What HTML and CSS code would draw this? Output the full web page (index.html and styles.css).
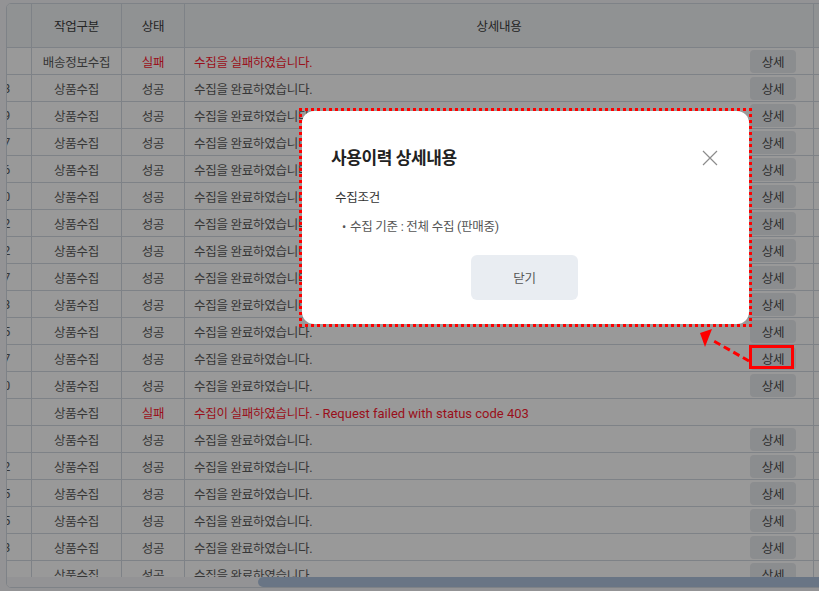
FILE: index.html
```html
<!DOCTYPE html>
<html lang="ko">
<head>
<meta charset="UTF-8">
<meta name="viewport" content="width=device-width, initial-scale=1.0">
<title>사용이력</title>
<link rel="stylesheet" href="styles.css">
</head>
<body>
<div class="history-table">
  <div class="table-view">
    <table>
      <thead>
        <tr>
          <th class="col-no">No</th>
          <th class="col-date">작업일시</th>
          <th class="col-user">작업자</th>
          <th class="col-count">건수</th>
          <th class="col-type">작업구분</th>
          <th class="col-status">상태</th>
          <th class="col-detail">상세내용</th>
          <th class="col-end">처리시간</th>
        </tr>
      </thead>
      <tbody>
        <tr>
          <td>21</td><td>2024-05-14 10:42</td><td>admin</td><td class="num"></td>
          <td>배송정보수집</td><td class="fail">실패</td>
          <td class="detail"><div class="detail-row"><span class="fail">수집을 실패하였습니다.</span><button class="btn-detail">상세</button></div></td>
          <td>00:03</td>
        </tr>
        <tr>
          <td>20</td><td>2024-05-14 10:31</td><td>admin</td><td class="num">1203</td>
          <td>상품수집</td><td>성공</td>
          <td class="detail"><div class="detail-row"><span>수집을 완료하였습니다.</span><button class="btn-detail">상세</button></div></td>
          <td>01:12</td>
        </tr>
        <tr>
          <td>19</td><td>2024-05-13 18:02</td><td>admin</td><td class="num">1189</td>
          <td>상품수집</td><td>성공</td>
          <td class="detail"><div class="detail-row"><span>수집을 완료하였습니다.</span><button class="btn-detail">상세</button></div></td>
          <td>01:09</td>
        </tr>
        <tr>
          <td>18</td><td>2024-05-13 09:15</td><td>admin</td><td class="num">1187</td>
          <td>상품수집</td><td>성공</td>
          <td class="detail"><div class="detail-row"><span>수집을 완료하였습니다.</span><button class="btn-detail">상세</button></div></td>
          <td>01:08</td>
        </tr>
        <tr>
          <td>17</td><td>2024-05-12 17:48</td><td>admin</td><td class="num">1176</td>
          <td>상품수집</td><td>성공</td>
          <td class="detail"><div class="detail-row"><span>수집을 완료하였습니다.</span><button class="btn-detail">상세</button></div></td>
          <td>01:05</td>
        </tr>
        <tr>
          <td>16</td><td>2024-05-12 11:20</td><td>admin</td><td class="num">1160</td>
          <td>상품수집</td><td>성공</td>
          <td class="detail"><div class="detail-row"><span>수집을 완료하였습니다.</span><button class="btn-detail">상세</button></div></td>
          <td>01:04</td>
        </tr>
        <tr>
          <td>15</td><td>2024-05-11 16:33</td><td>admin</td><td class="num">1152</td>
          <td>상품수집</td><td>성공</td>
          <td class="detail"><div class="detail-row"><span>수집을 완료하였습니다.</span><button class="btn-detail">상세</button></div></td>
          <td>01:02</td>
        </tr>
        <tr>
          <td>14</td><td>2024-05-11 08:57</td><td>admin</td><td class="num">1142</td>
          <td>상품수집</td><td>성공</td>
          <td class="detail"><div class="detail-row"><span>수집을 완료하였습니다.</span><button class="btn-detail">상세</button></div></td>
          <td>01:02</td>
        </tr>
        <tr>
          <td>13</td><td>2024-05-10 15:10</td><td>admin</td><td class="num">1137</td>
          <td>상품수집</td><td>성공</td>
          <td class="detail"><div class="detail-row"><span>수집을 완료하였습니다.</span><button class="btn-detail">상세</button></div></td>
          <td>01:01</td>
        </tr>
        <tr>
          <td>12</td><td>2024-05-10 09:44</td><td>admin</td><td class="num">1123</td>
          <td>상품수집</td><td>성공</td>
          <td class="detail"><div class="detail-row"><span>수집을 완료하였습니다.</span><button class="btn-detail">상세</button></div></td>
          <td>00:59</td>
        </tr>
        <tr>
          <td>11</td><td>2024-05-09 14:21</td><td>admin</td><td class="num">1115</td>
          <td>상품수집</td><td>성공</td>
          <td class="detail"><div class="detail-row"><span>수집을 완료하였습니다.</span><button class="btn-detail">상세</button></div></td>
          <td>00:58</td>
        </tr>
        <tr>
          <td>10</td><td>2024-05-09 08:30</td><td>admin</td><td class="num">1107</td>
          <td>상품수집</td><td>성공</td>
          <td class="detail"><div class="detail-row"><span>수집을 완료하였습니다.</span><button class="btn-detail">상세</button></div></td>
          <td>00:58</td>
        </tr>
        <tr>
          <td>9</td><td>2024-05-08 17:05</td><td>admin</td><td class="num">1100</td>
          <td>상품수집</td><td>성공</td>
          <td class="detail"><div class="detail-row"><span>수집을 완료하였습니다.</span><button class="btn-detail">상세</button></div></td>
          <td>00:57</td>
        </tr>
        <tr>
          <td>8</td><td>2024-05-08 10:12</td><td>admin</td><td class="num"></td>
          <td>상품수집</td><td class="fail">실패</td>
          <td class="detail"><div class="detail-row"><span class="fail">수집이 실패하였습니다.<span class="en"> - Request failed with status code 403</span></span></div></td>
          <td>00:01</td>
        </tr>
        <tr>
          <td>7</td><td>2024-05-07 16:40</td><td>admin</td><td class="num"></td>
          <td>상품수집</td><td>성공</td>
          <td class="detail"><div class="detail-row"><span>수집을 완료하였습니다.</span><button class="btn-detail">상세</button></div></td>
          <td>00:55</td>
        </tr>
        <tr>
          <td>6</td><td>2024-05-07 09:02</td><td>admin</td><td class="num">1092</td>
          <td>상품수집</td><td>성공</td>
          <td class="detail"><div class="detail-row"><span>수집을 완료하였습니다.</span><button class="btn-detail">상세</button></div></td>
          <td>00:54</td>
        </tr>
        <tr>
          <td>5</td><td>2024-05-06 15:27</td><td>admin</td><td class="num">1085</td>
          <td>상품수집</td><td>성공</td>
          <td class="detail"><div class="detail-row"><span>수집을 완료하였습니다.</span><button class="btn-detail">상세</button></div></td>
          <td>00:54</td>
        </tr>
        <tr>
          <td>4</td><td>2024-05-06 08:48</td><td>admin</td><td class="num">1075</td>
          <td>상품수집</td><td>성공</td>
          <td class="detail"><div class="detail-row"><span>수집을 완료하였습니다.</span><button class="btn-detail">상세</button></div></td>
          <td>00:53</td>
        </tr>
        <tr>
          <td>3</td><td>2024-05-05 13:36</td><td>admin</td><td class="num">1063</td>
          <td>상품수집</td><td>성공</td>
          <td class="detail"><div class="detail-row"><span>수집을 완료하였습니다.</span><button class="btn-detail">상세</button></div></td>
          <td>00:52</td>
        </tr>
        <tr>
          <td>2</td><td>2024-05-05 09:11</td><td>admin</td><td class="num"></td>
          <td>상품수집</td><td>성공</td>
          <td class="detail"><div class="detail-row"><span>수집을 완료하였습니다.</span><button class="btn-detail">상세</button></div></td>
          <td>00:51</td>
        </tr>
        <tr>
          <td>1</td><td>2024-05-04 17:58</td><td>admin</td><td class="num">1041</td>
          <td>상품수집</td><td>성공</td>
          <td class="detail"><div class="detail-row"><span>수집을 완료하였습니다.</span><button class="btn-detail">상세</button></div></td>
          <td>00:50</td>
        </tr>
      </tbody>
    </table>
  </div>
  <div class="h-scroll"><div class="h-thumb"></div></div>
</div>

<div class="dim">
  <div class="modal-mark">
    <div class="modal">
      <div class="modal-head">
        <h2 class="modal-title">사용이력 상세내용</h2>
        <button class="modal-close" aria-label="닫기">
          <svg width="16" height="16" viewBox="0 0 16 16"><path d="M1 1L15 15M15 1L1 15" stroke="#8c8c8c" stroke-width="1.2" fill="none"/></svg>
        </button>
      </div>
      <div class="modal-body">
        <p class="cond-title">수집조건</p>
        <ul class="cond-list">
          <li>수집 기준 : 전체 수집 (판매중)</li>
        </ul>
      </div>
      <div class="modal-foot">
        <button class="btn-close">닫기</button>
      </div>
    </div>
  </div>
  <div class="btn-mark"></div>
  <svg class="mark-arrow" width="60" height="45" viewBox="0 0 60 45">
    <path d="M54 36L16 14.5" stroke="#ff0000" stroke-width="3" stroke-dasharray="7 4" fill="none"/>
    <polygon points="5,8 17,4 10,22" fill="#ff0000"/>
  </svg>
</div>
</body>
</html>
```

FILE: styles.css
```css
html, body {
  margin: 0;
  padding: 0;
  overflow: hidden;
  background-color: #f5f6f8;
  font-family: Roboto, "Noto Sans CJK KR", sans-serif;
  font-size: 12.5px;
  letter-spacing: -0.25px;
  color: #5a5a5a;
}

body {
  padding: 3px 0 0 6px;
}

/* 표: 오른쪽 끝으로 스크롤된 상태 */
.history-table {
  box-sizing: border-box;
  width: 910px;
  height: 585px;
  border: 1px solid #d3d9e1;
  border-radius: 5px;
  background-color: #fff;
  overflow: hidden;
  display: flex;
  flex-direction: column;
}

.table-view {
  direction: rtl;
  flex: 1;
  overflow: hidden;
}

.h-scroll {
  flex-shrink: 0;
  height: 10px;
  background-color: #f5f6f8;
}

.h-thumb {
  height: 100%;
  margin-left: 251px;
  background-color: #b0c4de;
  border-radius: 5px;
}

.table-view table {
  direction: ltr;
  table-layout: fixed;
  width: 1255px;
  border-collapse: separate;
  border-spacing: 0;
}

.table-view th,
.table-view td {
  box-sizing: border-box;
  padding: 0 8px;
  border-right: 1px solid #d3d9e1;
  border-bottom: 1px solid #d3d9e1;
  text-align: center;
  white-space: nowrap;
  overflow: hidden;
}

.table-view th {
  height: 44px;
  background-color: #f1f3f6;
  color: #3c3c3c;
  font-weight: 400;
}

.table-view td {
  height: 27px;
}

.col-no { width: 60px; }
.col-date { width: 156px; }
.col-user { width: 90px; }
.col-count { width: 66px; }
.col-type { width: 90px; }
.col-status { width: 63px; }
.col-detail { width: 629px; }
.col-end { width: 101px; }

.table-view th.col-count {
  text-align: left;
}

.table-view td.num {
  text-align: right;
  padding-right: 21px;
}

.table-view td.detail {
  padding: 0 17px 0 9px;
  text-align: left;
}

.detail-row {
  display: flex;
  align-items: center;
  justify-content: space-between;
}

.btn-detail {
  width: 46px;
  height: 23px;
  padding: 0;
  border: none;
  border-radius: 4px;
  background-color: #e8ebef;
  color: #4a4a4a;
  font: inherit;
  letter-spacing: inherit;
}

.fail {
  color: #ff1a30;
}

.en {
  font-size: 13px;
  letter-spacing: 0;
}

/* 모달 */
.dim {
  position: fixed;
  inset: 0;
  background-color: rgba(0, 0, 0, 0.4);
}

.modal-mark {
  position: absolute;
  left: 299px;
  top: 108px;
  width: 453px;
  height: 219px;
  box-sizing: border-box;
  border: 3px dotted #ff0000;
}

.modal {
  box-sizing: border-box;
  height: 100%;
  padding: 35px 31px 23px 29px;
  background-color: #fff;
  border-radius: 12px;
  display: flex;
  flex-direction: column;
}

.modal-head {
  display: flex;
  align-items: center;
  justify-content: space-between;
  height: 24px;
}

.modal-title {
  margin: 0;
  font-size: 17px;
  font-weight: 700;
  line-height: 24px;
  color: #222;
  letter-spacing: -0.4px;
}

.modal-close {
  display: flex;
  padding: 0;
  border: none;
  background: none;
}

.modal-body {
  padding-left: 4px;
}

.cond-title {
  margin: 18px 0 0;
  line-height: 20px;
  color: #333;
}

.cond-list {
  margin: 9px 0 0;
  padding: 0 0 0 7px;
  list-style: none;
  line-height: 20px;
  color: #555;
}

.cond-list li::before {
  content: "•";
  margin-right: 4px;
}

.modal-foot {
  margin-top: 18px;
  display: flex;
  justify-content: center;
}

.btn-close {
  width: 107px;
  height: 45px;
  border: none;
  border-radius: 6px;
  background-color: #e9edf2;
  color: #555;
  font: inherit;
  letter-spacing: inherit;
}

/* 표시용 주석 */
.btn-mark {
  position: absolute;
  left: 749px;
  top: 345px;
  width: 45px;
  height: 24px;
  box-sizing: border-box;
  border: 3px solid #ff0000;
}

.mark-arrow {
  position: absolute;
  left: 695px;
  top: 325px;
}
```
